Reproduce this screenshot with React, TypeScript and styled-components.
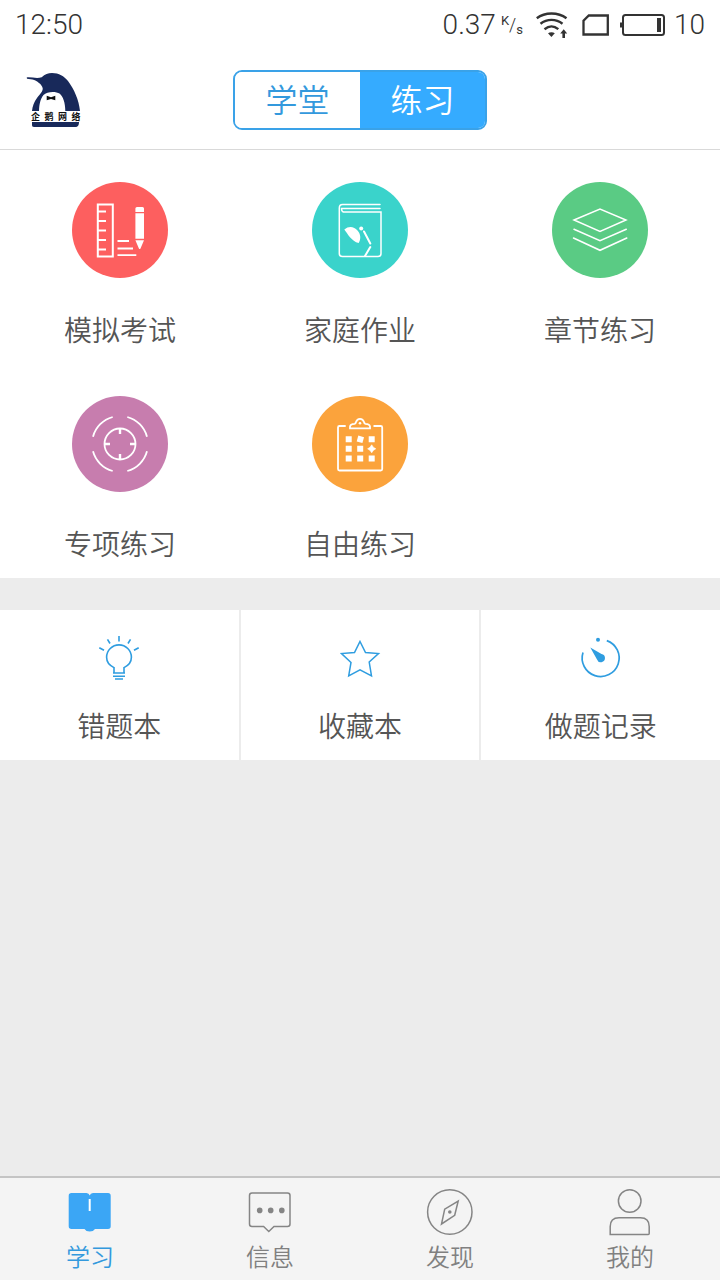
import React from 'react';
import styled, { createGlobalStyle } from 'styled-components';

const GlobalStyle = createGlobalStyle`
  *, *::before, *::after { box-sizing: border-box; }
  body {
    margin: 0;
    background: #ececec;
    font-family: Roboto, "Noto Sans CJK SC", sans-serif;
    font-weight: 350;
  }
  button { font: inherit; color: inherit; cursor: pointer; }
  svg { display: block; flex: none; }
`;

const Page = styled.div`
  min-height: 100vh;
  display: flex;
  flex-direction: column;
`;

const StatusBar = styled.div`
  display: flex;
  align-items: center;
  justify-content: space-between;
  height: 50px;
  padding: 0 15px;
  background: #fff;
  color: #333;
  font-size: 28px;
  font-weight: 300;
  line-height: 48px;
`;

const StatusGroup = styled.div`
  display: flex;
  align-items: center;
`;

const StatusIcon = styled.span<{ $gap: number }>`
  margin-left: ${(p) => p.$gap}px;
`;

const Unit = styled.span`
  display: flex;
  height: 22px;
  margin-left: 5px;
  font-size: 13px;
  line-height: 13px;
  font-weight: 400;
`;

const UnitSlash = styled.span`
  font-size: 18px;
  line-height: 22px;
  font-weight: 300;
`;

const UnitLow = styled.span`
  align-self: flex-end;
`;

const Header = styled.header`
  display: grid;
  grid-template-columns: 1fr auto 1fr;
  align-items: center;
  height: 100px;
  padding: 0 26px;
  background: #fff;
  border-bottom: 1px solid #d9d9d9;
`;

const Segmented = styled.div`
  display: flex;
  width: 254px;
  height: 60px;
  border: 2px solid #3aa2e8;
  border-radius: 9px;
  overflow: hidden;
`;

const Segment = styled.button<{ $active?: boolean }>`
  flex: 1;
  padding: 2px 0 0;
  border: 0;
  background: ${(p) => (p.$active ? '#35abff' : '#fff')};
  color: ${(p) => (p.$active ? '#fff' : '#3399dd')};
  font-size: 32px;
  line-height: 54px;
`;

const PracticeGrid = styled.section`
  display: grid;
  grid-template-columns: repeat(3, 1fr);
  background: #fff;
`;

const PracticeItem = styled.button`
  display: flex;
  flex-direction: column;
  align-items: center;
  gap: 34px;
  height: 214px;
  padding: 32px 0 0;
  border: 0;
  background: none;
  color: #555;
  font-size: 28px;
  line-height: 40px;
`;

const Disc = styled.span<{ $color: string }>`
  width: 96px;
  height: 96px;
  border-radius: 50%;
  background: ${(p) => p.$color};
`;

const RecordRow = styled.section`
  display: grid;
  grid-template-columns: repeat(3, 1fr);
  gap: 2px;
  margin-top: 32px;
`;

const RecordItem = styled.button`
  display: flex;
  flex-direction: column;
  align-items: center;
  gap: 26px;
  height: 150px;
  padding: 24px 0 0;
  border: 0;
  background: #fff;
  color: #555;
  font-size: 28px;
  line-height: 40px;
`;

const TabBar = styled.nav`
  display: grid;
  grid-template-columns: repeat(4, 1fr);
  height: 104px;
  margin-top: auto;
  background: #f4f4f4;
  border-top: 2px solid #c4c4c4;
`;

const Tab = styled.a<{ $active?: boolean }>`
  display: flex;
  flex-direction: column;
  align-items: center;
  gap: 6px;
  padding-top: 10px;
  color: ${(p) => (p.$active ? '#3399dd' : '#808080')};
  font-size: 24px;
  line-height: 32px;
  text-decoration: none;
`;

const Logo = () => (
  <svg width="56" height="56" viewBox="0 0 56 56" role="img" aria-label="企鹅网络">
    <path
      fill="#18295a"
      d="M.7 5.400C6 5 11 6.800 15.700 5.200C19 2.400 22 1 26 1C33 1 38 4 42 9C48 17 53 28 54 39H39.300C39.300 31 37 24 33.500 21.500C30 19.200 21 19.200 17.500 23C14.300 27 13.300 32 13 39H6C6.500 34 8 30 11 26C14 22 17 19.500 16.700 16.300C16 12.500 11 8.800 6.500 7.600L1 6.800Z"
    />
    <path fill="#111" d="M20.700 23.700L25 25.200L29.300 23.700V28.300L25 26.900L20.700 28.300Z" />
    <text
      x="5 18.500 32 45.500"
      y="48"
      fontSize="9"
      fontWeight="700"
      fontFamily='"Noto Sans CJK SC", sans-serif'
      fill="#111"
    >
      企鹅网络
    </text>
    <path fill="#18295a" d="M6 50H53C53 53 52 55 49 55H8C6.500 55 6 54 6 53Z" />
  </svg>
);

const WifiIcon = () => (
  <svg width="32" height="28" viewBox="0 0 32 28" fill="none" stroke="#333" strokeWidth="2.400">
    <path d="M.8 7.300C9 .9 22 .9 30.500 7.300" />
    <path d="M4.500 12.800C11 7.600 20 7.600 26.500 12.800" />
    <path d="M8.500 18.200C13 14.600 18 14.600 22.300 18.200" />
    <path d="M12 22.200C14 20.800 17 20.800 18.800 22.200L15.400 26Z" fill="#333" stroke="none" />
    <path d="M27.700 18.200L31.200 22.500H29V27H26.400V22.500H24.200Z" fill="#333" stroke="none" />
  </svg>
);

const SimIcon = () => (
  <svg width="28" height="22" viewBox="0 0 28 22" fill="none" stroke="#333" strokeWidth="2.300">
    <path d="M6.800 1.500H25.800V20.500H1.500V6.800Z" />
  </svg>
);

const BatteryIcon = () => (
  <svg width="45" height="22" viewBox="0 0 45 22" fill="none" stroke="#333" strokeWidth="2">
    <rect x="3" y="1" width="41" height="20" rx="2.500" />
    <path d="M1 8.500V13.500" />
    <path d="M39 4V18" strokeWidth="4" />
  </svg>
);

const ExamIcon = () => (
  <svg width="96" height="96" viewBox="0 0 96 96" fill="none" stroke="#fff" strokeWidth="2">
    <rect x="25.800" y="22.500" width="15" height="52" />
    <path d="M26 29.500H34M26 39H34M26 48.500H34M26 58H34M26 67.500H34" strokeWidth="1.800" />
    <path d="M45.500 59H57M45.500 66.500H61M45.500 73.200H64.300" strokeWidth="1.800" />
    <path
      d="M65 25H70.500Q72 25 72 26.500V30H63.400V26.500Q63.400 25 65 25ZM63.400 31.300H72V56.700H63.400ZM63.400 58.300H72L68.500 66.400Q67.700 67.500 66.900 66.400Z"
      fill="#fff"
      stroke="none"
    />
  </svg>
);

const HomeworkIcon = () => (
  <svg width="96" height="96" viewBox="0 0 96 96" fill="none" stroke="#fff" strokeWidth="1.500" strokeLinecap="round">
    <path d="M68 22.500H30.500Q27.300 22.500 27.300 26V71.500Q27.300 74.500 30.500 74.500H66Q69 74.500 69 71.500V30H31.500Q29.500 29.500 29.500 26.500H68" />
    <path d="M32.300 47.500C37 43.500 42 44.500 45.500 48.500C49 52.500 49 57 46.700 61C39.500 59.500 35.500 51.500 32.300 47.500Z" fill="#fff" stroke="none" />
    <circle cx="49.200" cy="46.500" r="2" fill="#fff" stroke="none" />
    <path d="M52 49.500L58.300 61.500M58.300 65L53 74" strokeWidth="2" />
  </svg>
);

const ChapterIcon = () => (
  <svg width="96" height="96" viewBox="0 0 96 96" fill="none" stroke="#fff" strokeWidth="1.500" strokeLinecap="round">
    <path d="M22 38L48 27L74 38L48 49.500Z" />
    <path d="M22 47.300L48 58.700L74.300 47.300M21.500 56L48 68.300L74.800 56" />
  </svg>
);

const SpecialIcon = () => (
  <svg width="96" height="96" viewBox="0 0 96 96" fill="none" stroke="#fff" strokeWidth="1.800">
    <circle cx="48" cy="48" r="15.500" />
    <path d="M48 33V38M48 58V63M33 48H38M58 48H63" strokeWidth="2.400" />
    <path d="M55.300 21A28 28 0 0 1 75 40.700M75 55.300A28 28 0 0 1 55.300 75M40.700 75A28 28 0 0 1 21 55.300M21 40.700A28 28 0 0 1 40.700 21" />
  </svg>
);

const FreeIcon = () => (
  <svg width="96" height="96" viewBox="0 0 96 96" fill="none" stroke="#fff" strokeWidth="1.800">
    <path d="M33.700 30H27.500Q26 30 26 31.500V73Q26 74.500 27.500 74.500H68.700Q70.200 74.500 70.200 73V31.500Q70.200 30 68.700 30H61.500" />
    <path d="M38 32.400V30.500Q38.300 28 42.500 27.800Q43.700 27.500 44 26Q45 22.800 48 22.800Q51 22.800 52 26Q52.300 27.500 53.500 27.800Q57.700 28 58 30.500V32.400Z" />
    <circle cx="48" cy="27.300" r="1.300" fill="#fff" stroke="none" />
    <g fill="#fff" stroke="none">
      <path d="M33.700 40.200h6v6h-6zM56.700 40.200h6v6h-6zM33.700 49.800h6v6h-6zM45.200 49.800h6v6h-6zM33.700 59.400h6v6h-6zM45.200 59.400h6v6h-6zM56.700 59.400h6v6h-6z" />
      <path d="M46.300 39.600L52 41.200L50.400 47L44.700 45.400Z" />
      <path d="M59.700 48.800L61.300 51.200L63.800 52.800L61.300 54.400L59.700 56.800L58.100 54.400L55.600 52.800L58.100 51.200Z" strokeWidth=".6" stroke="#fff" />
    </g>
  </svg>
);

const BulbIcon = () => (
  <svg width="48" height="48" viewBox="0 0 48 48" fill="none" stroke="#2f9de0" strokeWidth="1.600">
    <path d="M19 39V33.600C14.500 31.500 11.600 28 11.600 23.300A12.400 12.400 0 0 1 36.400 23.300C36.400 28 33.500 31.500 29 33.600V39" />
    <path d="M18 39H30M18 42.200H30M20 45H28M24 2V7.500M12.500 5.300L15 9.500M35.500 5.300L33 9.500M4.300 13.700L9 16.300M43.700 13.700L39 16.300" />
  </svg>
);

const StarIcon = () => (
  <svg width="48" height="48" viewBox="0 0 48 48" fill="none" stroke="#2f9de0" strokeWidth="1.500">
    <path d="M24 7.500L29.500 18.500L42.500 19.500L33.200 28L35.500 41.800L24 35.800L12.700 41.800L15 28.400L5.500 19.500L18.500 18.500Z" />
  </svg>
);

const TimerIcon = () => (
  <svg width="48" height="48" viewBox="0 0 48 48" fill="none" stroke="#2f9de0" strokeWidth="1.700">
    <path d="M29.800 6.600A18.500 18.500 0 1 1 6 18.500" />
    <circle cx="21" cy="5.800" r="2" fill="#2f9de0" stroke="none" />
    <path d="M13.300 13.500L24.500 20.100A4.100 4.100 0 1 1 20 25.500Z" fill="#2f9de0" stroke="none" />
  </svg>
);

const StudyIcon = () => (
  <svg width="48" height="48" viewBox="0 0 48 48">
    <path
      fill="#3ba6f5"
      d="M5.500 5H20.500Q23 5 23.700 7.500Q24.400 5 27 5H42Q44.700 5 44.700 7.700V38.300Q44.700 41 42 41H29Q27.500 43.500 23.700 43.500Q20 43.500 18.500 41H5.500Q2.700 41 2.700 38.300V7.700Q2.700 5 5.500 5Z"
    />
    <path d="M23.700 11V23" stroke="#fff" strokeWidth="2" />
  </svg>
);

const MessageIcon = () => (
  <svg width="48" height="48" viewBox="0 0 48 48" fill="none" stroke="#858585" strokeWidth="1.500">
    <path d="M6 5H41.500Q44 5 44 7.500V36Q44 38.500 41.500 38.500H28L22.800 43.500L17.600 38.500H6Q3.500 38.500 3.500 36V7.500Q3.500 5 6 5Z" />
    <g fill="#858585" stroke="none">
      <circle cx="13.700" cy="22.400" r="2.800" />
      <circle cx="24.700" cy="22.400" r="2.800" />
      <circle cx="35.800" cy="22.400" r="2.800" />
    </g>
  </svg>
);

const CompassIcon = () => (
  <svg width="48" height="48" viewBox="0 0 48 48" fill="none" stroke="#858585" strokeWidth="1.500">
    <circle cx="23.800" cy="24" r="22.200" />
    <path d="M32.200 13L28.700 27.300L15.500 36L18.700 21.200Z" />
    <circle cx="23.800" cy="24" r="1.800" fill="#858585" stroke="none" />
  </svg>
);

const UserIcon = () => (
  <svg width="48" height="48" viewBox="0 0 48 48" fill="none" stroke="#858585" strokeWidth="1.500">
    <circle cx="23.700" cy="13" r="11.300" />
    <path d="M4.200 46.500V38.500Q4.200 29.700 13 29.700H34.400Q43.200 29.700 43.200 38.500V45.500Q43.200 46.500 42.200 46.500Z" />
  </svg>
);

const practices = [
  { label: '模拟考试', color: '#fd5f5f', Icon: ExamIcon },
  { label: '家庭作业', color: '#3ad3cb', Icon: HomeworkIcon },
  { label: '章节练习', color: '#5acb84', Icon: ChapterIcon },
  { label: '专项练习', color: '#c77dae', Icon: SpecialIcon },
  { label: '自由练习', color: '#fba33c', Icon: FreeIcon },
];

const records = [
  { label: '错题本', Icon: BulbIcon },
  { label: '收藏本', Icon: StarIcon },
  { label: '做题记录', Icon: TimerIcon },
];

const tabs = [
  { label: '学习', Icon: StudyIcon, active: true },
  { label: '信息', Icon: MessageIcon },
  { label: '发现', Icon: CompassIcon },
  { label: '我的', Icon: UserIcon },
];

export default function App() {
  return (
    <Page>
      <GlobalStyle />
      <StatusBar>
        <span>12:50</span>
        <StatusGroup>
          <span>0.37</span>
          <Unit>
            <span>K</span>
            <UnitSlash>/</UnitSlash>
            <UnitLow>s</UnitLow>
          </Unit>
          <StatusIcon $gap={13}><WifiIcon /></StatusIcon>
          <StatusIcon $gap={14}><SimIcon /></StatusIcon>
          <StatusIcon $gap={10}><BatteryIcon /></StatusIcon>
          <StatusIcon $gap={9}>10</StatusIcon>
        </StatusGroup>
      </StatusBar>
      <Header>
        <Logo />
        <Segmented>
          <Segment type="button">学堂</Segment>
          <Segment type="button" $active>练习</Segment>
        </Segmented>
      </Header>
      <main>
        <PracticeGrid>
          {practices.map(({ label, color, Icon }) => (
            <PracticeItem key={label} type="button">
              <Disc $color={color}><Icon /></Disc>
              {label}
            </PracticeItem>
          ))}
        </PracticeGrid>
        <RecordRow>
          {records.map(({ label, Icon }) => (
            <RecordItem key={label} type="button">
              <Icon />
              {label}
            </RecordItem>
          ))}
        </RecordRow>
      </main>
      <TabBar>
        {tabs.map(({ label, Icon, active }) => (
          <Tab key={label} href="#" $active={active}>
            <Icon />
            {label}
          </Tab>
        ))}
      </TabBar>
    </Page>
  );
}
